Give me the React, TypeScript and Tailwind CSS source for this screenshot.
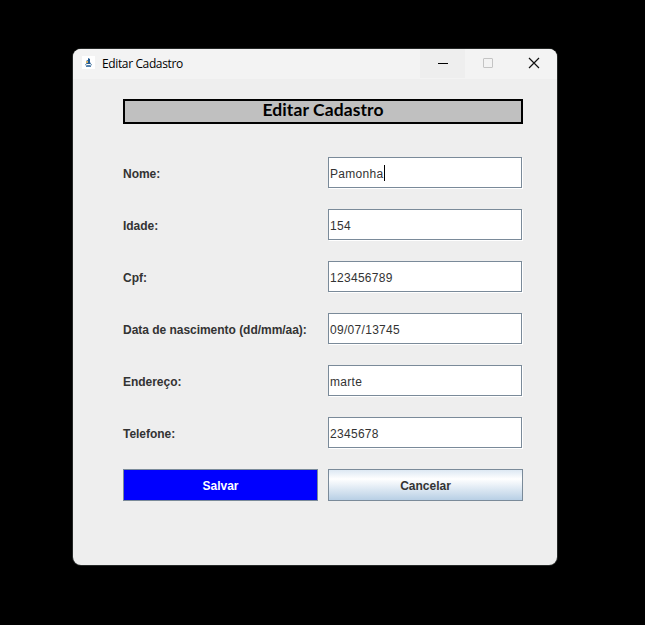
import React from "react";

const fields = [
  ["Nome:", "Pamonha"],
  ["Idade:", "154"],
  ["Cpf:", "123456789"],
  ["Data de nascimento (dd/mm/aa):", "09/07/13745"],
  ["Endereço:", "marte"],
  ["Telefone:", "2345678"],
];

export default function App() {
  return (
    <div className="h-[625px] w-[645px] bg-black pl-[73px] pt-[49px] font-['Liberation_Sans',Arial,sans-serif] text-[12px] text-[#333]">
      <div className="h-[516px] w-[484px] overflow-hidden rounded-lg bg-[#eee] shadow-[0_0_0_1px_#252827]">
        <header className="flex h-[30px] items-center bg-[#f3f3f3] pl-[9px]">
          <svg width="13" height="13" viewBox="0 0 13 13" className="mb-[10px] shrink-0 self-end">
            <rect width="13" height="13" fill="#fff" />
            <path d="M6 2L8 3V6L9 8H4L5 6L4 5L6 4Z" fill="#235a92" />
            <path d="M4 5H6V7H4Z" fill="#d9b568" />
            <path d="M3 8.5L5 9.5H8L10 8.5M4 10.5H9" stroke="#5783ad" fill="none" />
          </svg>
          <span className="ml-[7px] grow font-['Open_Sans',sans-serif] text-[12px] tracking-[-0.37px] text-black">Editar Cadastro</span>
          <svg width="137" height="30" viewBox="0 0 137 30" className="shrink-0" fill="none">
            <rect width="45" height="29" fill="#eee" />
            <path d="M18 14.5H28" stroke="#000" />
            <rect x="63.5" y="9.5" width="9" height="9" rx="0.5" stroke="#c4c4c4" />
            <path d="M109 9L119 19M119 9L109 19" stroke="#111" strokeWidth="1.2" />
          </svg>
        </header>
        <main className="pl-[50px] pt-[20px]">
          <h1 className="flex h-[25px] w-[400px] items-center justify-center border-2 border-black bg-[#c0c0c0] pb-[3px] font-[Lato,sans-serif] text-[17.5px] font-bold tracking-[0.1px] text-black">Editar Cadastro</h1>
          <div className="mt-[33px] flex flex-col gap-[21px]">
            {fields.map(([label, value], i) => (
              <div key={label} className="flex h-[31px] items-center">
                <label className="w-[205px] shrink-0 pt-[3px] font-bold tracking-[-0.03px]">{label}</label>
                <div className="flex h-[31px] w-[194px] shrink-0 items-center border border-[#7a8a99] bg-white pl-px pt-[3px] tracking-[0.3px] shadow-[1px_1px_0_#fff]">
                  {value}
                  {i === 0 && <span className="-mt-[3px] ml-px h-[16px] w-px bg-black" />}
                </div>
              </div>
            ))}
          </div>
          <div className="mt-[21px] flex gap-[10px] font-bold">
            <button className="h-[32px] w-[195px] shrink-0 border border-[#7a8a99] bg-[#00f] pt-[2px] text-white">Salvar</button>
            <button className="h-[32px] w-[195px] shrink-0 border border-[#7a8a99] bg-linear-to-b from-[#dde8f3] via-white via-30% to-[#b8cfe5] pt-[2px]">Cancelar</button>
          </div>
        </main>
      </div>
    </div>
  );
}
